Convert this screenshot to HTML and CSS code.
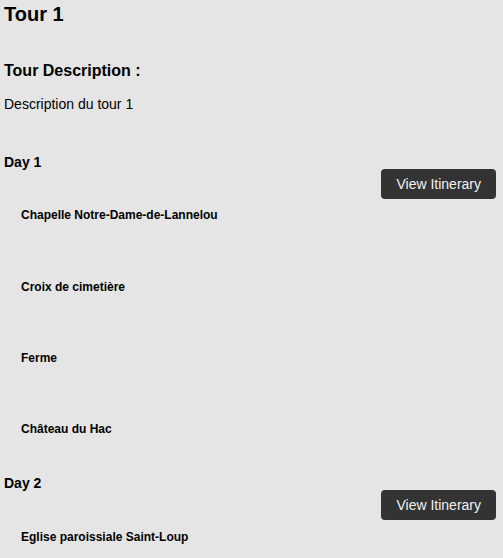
FILE: index.html
```html
<!DOCTYPE html>
<html lang="fr">
<head>
<meta charset="utf-8">
<title>Tour 1</title>
<link rel="stylesheet" href="styles.css">
</head>
<body>
<main class="page">
  <h1 class="tour-title">Tour 1</h1>
  <h2 class="section-title">Tour Description :</h2>
  <p class="description">Description du tour 1</p>

  <section class="day">
    <h3 class="day-title">Day 1</h3>
    <div class="day-actions"><button class="btn">View Itinerary</button></div>
    <ul class="stops">
      <li class="stop">Chapelle Notre-Dame-de-Lannelou</li>
      <li class="stop">Croix de cimetière</li>
      <li class="stop">Ferme</li>
      <li class="stop">Château du Hac</li>
    </ul>
  </section>

  <section class="day">
    <h3 class="day-title">Day 2</h3>
    <div class="day-actions"><button class="btn">View Itinerary</button></div>
    <ul class="stops">
      <li class="stop">Eglise paroissiale Saint-Loup</li>
    </ul>
  </section>
</main>
</body>
</html>
```
FILE: styles.css
```css
html, body {
  margin: 0;
  padding: 0;
  background: #e5e5e5;
}
body {
  font-family: "Liberation Sans", Arial, sans-serif;
  color: #000;
  overflow: hidden;
}
.page {
  padding: 0 7px 0 4px;
}
.tour-title {
  margin: 3px 0 0;
  font-size: 20px;
  line-height: 23px;
  font-weight: bold;
}
.section-title {
  margin: 36px 0 0;
  font-size: 16px;
  line-height: 18px;
  font-weight: bold;
}
.description {
  margin: 16px 0 0;
  font-size: 14px;
  line-height: 16px;
}
.day {
  margin-top: 42px;
}
.day + .day {
  margin-top: 39px;
}
.day-title {
  margin: 0;
  font-size: 14px;
  line-height: 16px;
  font-weight: bold;
}
.day-actions {
  display: flex;
  justify-content: flex-end;
  margin-top: -1px;
}
.btn {
  font-family: "Liberation Sans", Arial, sans-serif;
  font-size: 14px;
  line-height: 16px;
  padding: 7px 15px;
  background: #333;
  color: #f2f2f2;
  border: none;
  border-radius: 4px;
}
.stops {
  list-style: none;
  margin: 9.4px 0 0 17px;
  padding: 0;
  display: flex;
  flex-direction: column;
  gap: 57.33px;
}
.stop {
  font-size: 12px;
  line-height: 14px;
  font-weight: bold;
}
```
